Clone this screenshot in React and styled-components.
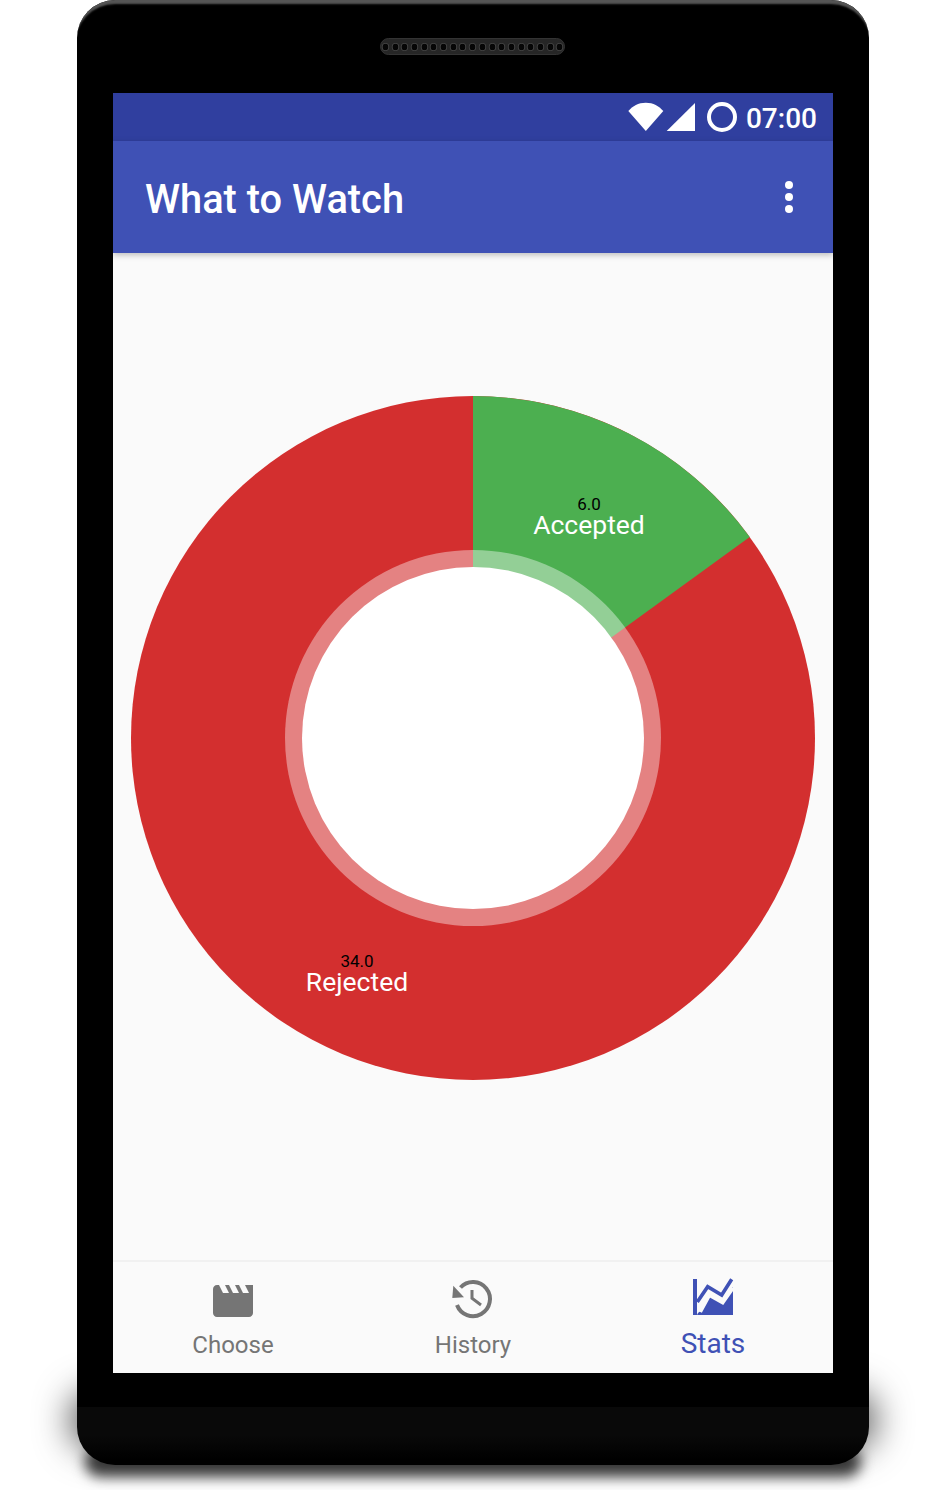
import React from "react";
import styled, { createGlobalStyle } from "styled-components";

const Global = createGlobalStyle`
  html { background: #fff; }
  body { margin: 0; padding: 0; font-family: Roboto, "Liberation Sans", sans-serif; }
`;

const Page = styled.div`
  width: 945px;
  height: 1490px;
  padding-left: 77px;
  box-sizing: border-box;
  overflow: hidden;
`;

const Phone = styled.div`
  position: relative;
  width: 792px;
  height: 1465px;
  box-sizing: border-box;
  padding: 38px 36px 0;
  border-radius: 38px;
  background: linear-gradient(#000 0, #000 1407px, #090909 1407px, #090909 1435px, #000 1460px);
  box-shadow: inset 0 6px 2px -2px #555;

  &::before {
    content: "";
    position: absolute;
    z-index: -1;
    left: 8px;
    right: 8px;
    bottom: 30px;
    height: 30px;
    border-radius: 30px;
    box-shadow: 0 0 36px 14px rgba(0, 0, 0, 0.72), 0 42px 13px 0 rgba(0, 0, 0, 0.75);
  }
`;

const Speaker = styled.div`
  display: flex;
  align-items: center;
  justify-content: center;
  gap: 1px;
  width: 185px;
  height: 17px;
  margin: 0 0 38px 267px;
  box-sizing: border-box;
  border-radius: 9px;
  background: #262626;
  border: 1px solid #333;
`;

const Hole = styled.span`
  width: 8px;
  height: 8px;
  border-radius: 50%;
  background: #060606;
  border: 1px solid #4a4a4a;
  box-sizing: content-box;
  transform: scale(0.82);
`;

const Screen = styled.div`
  display: flex;
  flex-direction: column;
  width: 720px;
  height: 1280px;
  background: #fafafa;
`;

const StatusBar = styled.div`
  display: flex;
  align-items: center;
  justify-content: flex-end;
  gap: 12px;
  height: 48px;
  padding-right: 16px;
  background: #303f9f;
  color: #fff;
`;

const Clock = styled.span`
  margin-left: -3px;
  padding-top: 3px;
  font-size: 28px;
  font-weight: 500;
  line-height: 48px;
`;

const AppBar = styled.header`
  position: relative;
  display: flex;
  align-items: center;
  justify-content: space-between;
  height: 112px;
  padding: 0 40px 0 32px;
  background: #3f51b5;
  box-shadow: 0 2px 6px rgba(0, 0, 0, 0.25);
`;

const Title = styled.h1`
  margin: 4px 0 0;
  font-size: 39.8px;
  font-weight: 500;
  color: #fff;
`;

const Kebab = styled.div`
  display: flex;
  flex-direction: column;
  gap: 4px;
`;

const Dot = styled.span`
  width: 8px;
  height: 8px;
  border-radius: 50%;
  background: #fff;
`;

const Content = styled.main`
  flex: 1;
  display: flex;
  align-items: center;
  justify-content: center;
  padding-bottom: 38px;
`;

const Chart = styled.div`
  position: relative;
  width: 684px;
  height: 684px;
`;

const Label = styled.div`
  position: absolute;
  left: ${(p) => p.$x}px;
  top: ${(p) => p.$y}px;
  transform: translateX(-50%);
  text-align: center;
  white-space: nowrap;
`;

const Value = styled.div`
  height: 15px;
  font-size: 17px;
  line-height: 15px;
  color: #000;
`;

const Name = styled.div`
  font-size: 26.5px;
  line-height: 26px;
  color: #fff;
`;

const BottomNav = styled.nav`
  display: grid;
  grid-template-columns: repeat(3, 1fr);
  height: 113px;
  box-sizing: border-box;
  border-top: 2px solid #f1f1f1;
`;

const Tab = styled.div`
  display: flex;
  flex-direction: column;
  align-items: center;
  padding-top: 15px;
  color: ${(p) => (p.$active ? "#3f51b5" : "#757575")};
`;

const TabIcon = styled.svg`
  display: block;
  width: 48px;
  height: 48px;
  fill: currentColor;
`;

const TabLabel = styled.span`
  margin-top: ${(p) => (p.$active ? 1 : 4)}px;
  font-size: ${(p) => (p.$active ? 28 : 24)}px;
  line-height: ${(p) => (p.$active ? 36 : 32)}px;
`;

// 34 + 6 = 40, so the green slice spans 54 degrees from the top
const R = 342;
const polar = (r, deg) => {
  const a = (deg * Math.PI) / 180;
  return [R + r * Math.sin(a), R - r * Math.cos(a)];
};
const wedge = (r, deg) => {
  const [x, y] = polar(r, deg);
  return `M${R} ${R}L${R} ${R - r}A${r} ${r} 0 0 1 ${x} ${y}Z`;
};

const DonutChart = () => (
  <Chart>
    <svg width="684" height="684" viewBox="0 0 684 684">
      <circle cx={R} cy={R} r={R} fill="#d32f2f" />
      <path d={wedge(R, 54)} fill="#4caf50" />
      <circle cx={R} cy={R} r="188" fill="#fff" fillOpacity="0.4" />
      <circle cx={R} cy={R} r="171" fill="#fff" />
    </svg>
    <Label $x={458} $y={101}>
      <Value>6.0</Value>
      <Name>Accepted</Name>
    </Label>
    <Label $x={226} $y={558}>
      <Value>34.0</Value>
      <Name>Rejected</Name>
    </Label>
  </Chart>
);

export default function App() {
  return (
    <>
      <Global />
      <Page>
        <Phone>
          <Speaker>
            {Array.from({ length: 19 }).map((_, i) => (
              <Hole key={i} />
            ))}
          </Speaker>
          <Screen>
            <StatusBar>
              <svg width="70" height="30" viewBox="0 0 70 30" fill="#fff">
                <path d="M3.300 9C8 4 13 .8 20.800 .8S33.500 4 38.300 9L20.800 29z" />
                <path d="M41.700 29L70 1v28z" />
              </svg>
              <svg width="30" height="30" viewBox="0 0 30 30">
                <circle cx="15" cy="15" r="13" fill="none" stroke="#fff" strokeWidth="4" />
              </svg>
              <Clock>07:00</Clock>
            </StatusBar>
            <AppBar>
              <Title>What to Watch</Title>
              <Kebab>
                <Dot />
                <Dot />
                <Dot />
              </Kebab>
            </AppBar>
            <Content>
              <DonutChart />
            </Content>
            <BottomNav>
              <Tab>
                <TabIcon viewBox="0 0 24 24">
                  <path d="M18 4l2 4h-3l-2-4h-2l2 4h-3l-2-4H8l2 4H7L5 4H4c-1.100 0-1.990.9-1.990 2L2 18c0 1.100.9 2 2 2h16c1.100 0 2-.9 2-2V4h-4z" />
                </TabIcon>
                <TabLabel>Choose</TabLabel>
              </Tab>
              <Tab>
                <TabIcon viewBox="0 0 48 48">
                  <path d="M4.300 8.700L3.300 21 15 20.300z" />
                  <path d="M11.500 10.500A17 17 0 1 1 8 28" fill="none" stroke="currentColor" strokeWidth="4" />
                  <path d="M23 13v8.300L32 28" fill="none" stroke="currentColor" strokeWidth="3" />
                </TabIcon>
                <TabLabel>History</TabLabel>
              </Tab>
              <Tab $active>
                <TabIcon viewBox="0 0 48 48">
                  <path d="M4 2h4v36H4zM8 38l1-2 2.300-2 9-16.700 13.400 7.400L44 10v28z" />
                  <path d="M11.300 35l9-16.700 13.400 7.400L44 11" fill="none" stroke="#fafafa" strokeWidth="3.500" />
                  <path d="M8.300 25l10.400-15.300L32.700 18l10-15.700" fill="none" stroke="currentColor" strokeWidth="3.600" />
                </TabIcon>
                <TabLabel $active>Stats</TabLabel>
              </Tab>
            </BottomNav>
          </Screen>
        </Phone>
      </Page>
    </>
  );
}
